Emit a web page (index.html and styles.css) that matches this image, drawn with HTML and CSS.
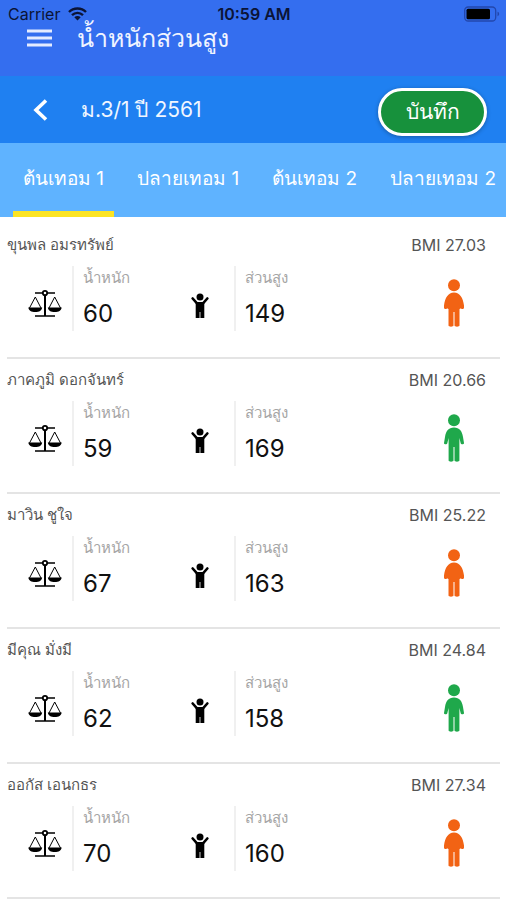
FILE: index.html
```html
<!DOCTYPE html>
<html lang="th">
<head>
    <meta charset="UTF-8">
    <meta name="viewport" content="width=device-width, initial-scale=1.0">
    <title>น้ำหนักส่วนสูง</title>
    <link rel="stylesheet" href="styles.css">
</head>
<body>
    <!-- shared icons -->
    <svg class="sprite" aria-hidden="true">
        <symbol id="scale" viewBox="0 0 34 30">
            <path d="M7 4h20M7 27h20" fill="none" stroke="currentColor" stroke-width="1.600"/>
            <path d="M17 4v23" stroke="currentColor" stroke-width="2"/>
            <circle cx="17" cy="4" r="2.200" fill="#fff" stroke="currentColor" stroke-width="1.800"/>
            <path d="M1.500 19L7.300 8L13 19M21 19L26.700 8L32.500 19" fill="none" stroke="currentColor" stroke-width="1"/>
            <path d="M.3 18.500h13.900c-.4 3.200-3 4.500-6.900 4.500S.7 21.700.3 18.500zM19.800 18.500h13.900c-.4 3.200-3 4.500-6.900 4.500s-6.600-1.300-7-4.500z" fill="currentColor"/>
        </symbol>
        <symbol id="child" viewBox="0 0 18 26">
            <circle cx="9" cy="4" r="3.500" fill="currentColor"/>
            <path d="M1.700 5.500L6 10.300h6l4.300-4.800" fill="none" stroke="currentColor" stroke-width="2.600" stroke-linecap="round" stroke-linejoin="round"/>
            <path d="M4.700 9.300h8.600V25H9.400v-6h-.8v6H4.700z" fill="currentColor"/>
        </symbol>
        <symbol id="body-normal" viewBox="0 0 20 48">
            <circle cx="10" cy="6.300" r="6" fill="currentColor"/>
            <path d="M10 13.500c5.500 0 8 3.500 9 9.500l1 6c.1 1.500-2.900 1.900-3.300.3L15.400 24v22.500c0 1.500-4.900 1.500-4.900 0V33h-1v13.500c0 1.500-4.900 1.500-4.900 0V24l-1.300 5.300C2.900 30.900-.1 30.500 0 29l1-6c1-6 3.500-9.500 9-9.500z" fill="currentColor"/>
        </symbol>
        <symbol id="body-over" viewBox="0 0 20 48">
            <circle cx="10" cy="6.300" r="6" fill="currentColor"/>
            <path d="M10 13.500c6 0 9 5.500 10 13 .3 2.500-.2 3.500-1.500 3.500-1 0-1.500-.2-1.700-.7-.3.500-.8.700-1.300.7v16.500c0 1.500-5 1.500-5 0V33h-1v13.500c0 1.500-5 1.500-5 0V30c-.5 0-1-.2-1.300-.7-.2.500-.7.700-1.700.7C.2 30-.3 29 0 26.500c1-7.500 4-13 10-13z" fill="currentColor"/>
        </symbol>
    </svg>

    <div class="status-bar">
        <div class="carrier">
            <span>Carrier</span>
            <svg width="19" height="14" viewBox="0 0 19 14">
                <path d="M1 5C5.500.4 13.500.4 18 5M4 8.200c3.200-3.100 7.800-3.100 11 0" fill="none" stroke="#0b1436" stroke-width="2.400"/>
                <path d="M9.500 13.500L6.300 10.300c1.900-1.700 4.500-1.700 6.400 0z" fill="#0b1436"/>
            </svg>
        </div>
        <div class="clock">10:59 AM</div>
        <div class="battery">
            <svg width="36" height="16" viewBox="0 0 36 16">
                <rect x=".7" y="1" width="31" height="14" rx="3.500" fill="none" stroke="#2247ad" stroke-width="1.300"/>
                <rect x="2.500" y="2.800" width="23.500" height="10.400" rx="1.500" fill="#000"/>
                <path d="M33.500 5.800c2.200.6 2.200 3.800 0 4.400z" fill="#2247ad"/>
            </svg>
        </div>
    </div>

    <header class="app-header">
        <button class="icon-btn" aria-label="เมนู">
            <svg width="25" height="18" viewBox="0 0 25 18">
                <path d="M0 2h25M0 9h25M0 16h25" stroke="#e4ebff" stroke-width="3"/>
            </svg>
        </button>
        <h1>น้ำหนักส่วนสูง</h1>
    </header>

    <div class="class-bar">
        <button class="icon-btn" aria-label="กลับ">
            <svg width="16" height="22" viewBox="0 0 16 22">
                <path d="M14 1.500L4 11l10 9.500" fill="none" stroke="#fff" stroke-width="3.600"/>
            </svg>
        </button>
        <h2>ม.3/1 ปี 2561</h2>
        <button class="save-btn">บันทึก</button>
    </div>

    <nav class="tabs">
        <a href="#" class="tab active">ต้นเทอม 1</a>
        <a href="#" class="tab">ปลายเทอม 1</a>
        <a href="#" class="tab">ต้นเทอม 2</a>
        <a href="#" class="tab">ปลายเทอม 2</a>
    </nav>

    <main class="students">
        <section class="student">
            <div class="student-head"><h3>ขุนพล อมรทรัพย์</h3><span class="bmi">BMI 27.03</span></div>
            <div class="student-body">
                <svg class="scale-icon"><use href="#scale"/></svg>
                <div class="field"><label for="w1">น้ำหนัก</label><input id="w1" type="text" value="60"></div>
                <svg class="child-icon"><use href="#child"/></svg>
                <div class="field"><label for="h1">ส่วนสูง</label><input id="h1" type="text" value="149"></div>
                <svg class="body-icon over"><use href="#body-over"/></svg>
            </div>
        </section>

        <section class="student">
            <div class="student-head"><h3>ภาคภูมิ ดอกจันทร์</h3><span class="bmi">BMI 20.66</span></div>
            <div class="student-body">
                <svg class="scale-icon"><use href="#scale"/></svg>
                <div class="field"><label for="w2">น้ำหนัก</label><input id="w2" type="text" value="59"></div>
                <svg class="child-icon"><use href="#child"/></svg>
                <div class="field"><label for="h2">ส่วนสูง</label><input id="h2" type="text" value="169"></div>
                <svg class="body-icon normal"><use href="#body-normal"/></svg>
            </div>
        </section>

        <section class="student">
            <div class="student-head"><h3>มาวิน ชูใจ</h3><span class="bmi">BMI 25.22</span></div>
            <div class="student-body">
                <svg class="scale-icon"><use href="#scale"/></svg>
                <div class="field"><label for="w3">น้ำหนัก</label><input id="w3" type="text" value="67"></div>
                <svg class="child-icon"><use href="#child"/></svg>
                <div class="field"><label for="h3">ส่วนสูง</label><input id="h3" type="text" value="163"></div>
                <svg class="body-icon over"><use href="#body-over"/></svg>
            </div>
        </section>

        <section class="student">
            <div class="student-head"><h3>มีคุณ มั่งมี</h3><span class="bmi">BMI 24.84</span></div>
            <div class="student-body">
                <svg class="scale-icon"><use href="#scale"/></svg>
                <div class="field"><label for="w4">น้ำหนัก</label><input id="w4" type="text" value="62"></div>
                <svg class="child-icon"><use href="#child"/></svg>
                <div class="field"><label for="h4">ส่วนสูง</label><input id="h4" type="text" value="158"></div>
                <svg class="body-icon normal"><use href="#body-normal"/></svg>
            </div>
        </section>

        <section class="student">
            <div class="student-head"><h3>ออกัส เอนกธร</h3><span class="bmi">BMI 27.34</span></div>
            <div class="student-body">
                <svg class="scale-icon"><use href="#scale"/></svg>
                <div class="field"><label for="w5">น้ำหนัก</label><input id="w5" type="text" value="70"></div>
                <svg class="child-icon"><use href="#child"/></svg>
                <div class="field"><label for="h5">ส่วนสูง</label><input id="h5" type="text" value="160"></div>
                <svg class="body-icon over"><use href="#body-over"/></svg>
            </div>
        </section>
    </main>
</body>
</html>
```

FILE: styles.css
```css
* {
    box-sizing: border-box;
}
body {
    margin: 0;
    background: #fff;
    color: #000;
    font-family: Inter, "Noto Sans", sans-serif;
}
h1, h2, h3 {
    margin: 0;
    font-weight: 400;
}
button, input {
    font-family: inherit;
}
.sprite {
    display: none;
}

/* status bar lies over the header */
.status-bar {
    position: absolute;
    top: 0;
    left: 0;
    right: 0;
    display: grid;
    grid-template-columns: 1fr auto 1fr;
    align-items: center;
    height: 28px;
    padding: 0 6px 0 8px;
    font-size: 16px;
    color: #0b1436;
}
.carrier {
    display: flex;
    align-items: center;
    gap: 8px;
}
.clock {
    font-weight: 600;
}
.battery {
    display: flex;
    justify-content: flex-end;
}

.app-header {
    display: flex;
    align-items: center;
    gap: 25px;
    height: 76px;
    padding: 0 27px;
    background: #346eef;
}
.app-header h1 {
    font-size: 25px;
    line-height: 40px;
    color: #f0f4ff;
}
.icon-btn {
    display: flex;
    padding: 0;
    border: none;
    background: none;
    cursor: pointer;
}

.class-bar {
    display: flex;
    align-items: center;
    height: 67px;
    padding: 0 19px 0 32px;
    background: #1f80f1;
}
.class-bar h2 {
    flex: 1;
    margin-left: 33px;
    font-size: 21px;
    line-height: 32px;
    color: #f0f6ff;
}
.save-btn {
    width: 109px;
    height: 48px;
    margin-top: 4px;
    padding: 0;
    border: 3px solid #fff;
    border-radius: 24px;
    background: #17913c;
    box-shadow: 0 1px 4px rgba(0, 0, 0, 0.3);
    color: #fff;
    font-size: 21px;
    font-weight: 500;
    cursor: pointer;
}

.tabs {
    display: flex;
    justify-content: space-between;
    height: 74px;
    padding-left: 13px;
    background: #5fb3ff;
    overflow: hidden;
}
.tab {
    padding: 20px 10px 0;
    border-bottom: 6px solid transparent;
    color: #fff;
    font-size: 19px;
    line-height: 32px;
    text-decoration: none;
    white-space: nowrap;
}
.tab.active {
    border-bottom-color: #fce424;
}

.students {
    padding: 7px 6px 0 7px;
}
.student {
    padding: 9px 0 26px;
    border-bottom: 2px solid #e4e4e4;
}
.student-head {
    display: flex;
    justify-content: space-between;
    padding-right: 14px;
    font-size: 16px;
    line-height: 24px;
    color: #555;
}
.student-head h3 {
    font-size: 15px;
}
.student-body {
    display: grid;
    grid-template-columns: 65fr 93fr 69fr 174fr 92fr;
    align-items: center;
    justify-items: center;
    margin-top: 9px;
}
.field {
    justify-self: stretch;
    height: 65px;
    padding-left: 9px;
    border-left: 2px solid #f0f0f0;
}
.field label {
    display: block;
    font-size: 15px;
    line-height: 24px;
    color: #a5a5a5;
}
.field input {
    display: block;
    width: 100%;
    height: 32px;
    margin-top: 7px;
    padding: 0;
    border: none;
    background: none;
    font-size: 24px;
    color: #111;
}
.scale-icon {
    width: 34px;
    height: 30px;
    margin: 11px 0 0 11px;
}
.child-icon {
    width: 18px;
    height: 26px;
    margin-top: 14px;
}
.body-icon {
    width: 20px;
    height: 48px;
    margin-top: 8px;
}
.body-icon.over {
    color: #f26314;
}
.body-icon.normal {
    color: #1fa84b;
}
```
